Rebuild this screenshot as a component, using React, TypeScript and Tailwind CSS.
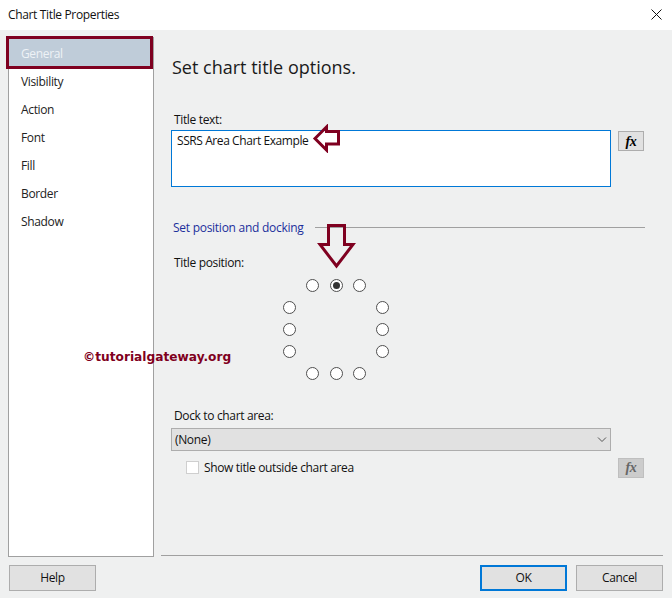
import React from 'react';

const navItems = ['General', 'Visibility', 'Action', 'Font', 'Fill', 'Border', 'Shadow'];

// 5 x 5 grid of anchor points, only the outer ring is used
const positions = [
  [0, 1, 1, 1, 0],
  [1, 0, 0, 0, 1],
  [1, 0, 0, 0, 1],
  [1, 0, 0, 0, 1],
  [0, 1, 1, 1, 0],
];

const Radio: React.FC<{ checked?: boolean }> = ({ checked }) => (
  <div className="w-[13px] h-[13px] rounded-full border border-[#4f4f4f] bg-white flex items-center justify-center">
    {checked && <div className="w-[7px] h-[7px] rounded-full bg-[#333333]" />}
  </div>
);

const FxButton: React.FC<{ disabled?: boolean; className?: string }> = ({ disabled, className }) => (
  <div
    className={`w-[26px] h-[20px] flex items-center justify-center border font-['Liberation_Serif',serif] italic font-bold text-[14px] ${
      disabled ? 'bg-[#cccccc] border-[#bfbfbf] text-[#666666]' : 'bg-[#e1e1e1] border-[#adadad] text-black'
    } ${className ?? ''}`}
  >
    fx
  </div>
);

const DialogButton: React.FC<{ label: string; primary?: boolean }> = ({ label, primary }) => (
  <div
    className={`w-[87px] h-[26px] flex items-center justify-center bg-[#e1e1e1] text-[#111111] ${
      primary ? 'border-2 border-[#0078d7]' : 'border border-[#adadad]'
    }`}
  >
    <span className="-mt-px">{label}</span>
  </div>
);

export default function App() {
  return (
    <div className="relative w-[672px] h-[598px] overflow-hidden bg-[#eff0f0] font-['Open_Sans',sans-serif] text-[12px] tracking-[-0.35px] text-[#111111]">
      {/* Title bar */}
      <div className="h-[30px] bg-white flex items-center justify-between pl-[8px] pr-[10px]">
        <span>Chart Title Properties</span>
        <svg width="11" height="11" viewBox="0 0 11 11" className="mb-[2px]">
          <path d="M0.5 0.5L10.5 10.5M10.5 0.5L0.5 10.5" stroke="#111" strokeWidth="1" fill="none" />
        </svg>
      </div>

      <div className="flex h-[526px] pl-[8px]">
        {/* Left nav */}
        <div className="w-[146px] h-[520px] mt-[7px] border border-[#a0a0a0] bg-white pt-[1px] pr-[1px]">
          {navItems.map((item, i) => (
            <div
              key={item}
              className={`flex items-center pl-[12px] ${
                i === 0 ? 'h-[29px] bg-[#bfccd9] text-[#eef2f6]' : 'h-[28px] text-[#222222]'
              }`}
            >
              {item}
            </div>
          ))}
        </div>

        {/* Main panel */}
        <div className="flex-1 ml-[18px] relative">
          <div className="text-[18px] leading-[24px] mt-[25px] tracking-normal text-[#1a1a1a]">Set chart title options.</div>

          <div className="ml-[2px] mt-[33px] leading-[16px]">Title text:</div>
          <div className="flex items-start -ml-px mt-[2px]">
            <div className="w-[440px] h-[57px] bg-white border border-[#0078d7] pl-[5px] pt-[1px] leading-[18px] tracking-[-0.42px]">
              SSRS Area Chart Example
            </div>
            <FxButton className="ml-[7px] mt-[1px]" />
          </div>

          <div className="flex items-center mt-[32px] h-[18px] w-[473px]">
            <span className="ml-px tracking-[-0.27px] text-[#1c2f9c]">Set position and docking</span>
            <div className="ml-[11px] h-px flex-1 bg-[#a0a0a0] -mt-[2px]" />
          </div>

          <div className="ml-[2px] mt-[18px] leading-[16px]">Title position:</div>

          <div className="ml-[106px] mt-[3px] grid grid-cols-[repeat(5,23.25px)] auto-rows-[22px] w-fit">
            {positions.flatMap((row, r) =>
              row.map((on, c) => (
                <div key={`${r}-${c}`} className="flex items-center justify-center">
                  {on === 1 && <Radio checked={r === 0 && c === 2} />}
                </div>
              ))
            )}
          </div>

          <div className="ml-[2px] mt-[24px] leading-[16px]">Dock to chart area:</div>
          <div className="-ml-px mt-[4px] w-[440px] h-[23px] bg-[#e1e1e1] border border-[#adadad] flex items-center justify-between pl-[3px] pr-[3px]">
            <span>(None)</span>
            <svg width="10" height="7" viewBox="0 0 10 7">
              <path d="M1 1.5L5 5.5L9 1.5" stroke="#555" strokeWidth="1" fill="none" />
            </svg>
          </div>
          <div className="flex items-center justify-between mt-[6px] h-[21px] w-[472px]">
            <div className="flex items-center ml-[14px]">
              <div className="w-[13px] h-[13px] bg-white border border-[#cfcfcf]" />
              <span className="ml-[5px]">Show title outside chart area</span>
            </div>
            <FxButton disabled />
          </div>
        </div>
      </div>

      {/* Footer */}
      <div className="flex">
        <div className="pl-[9px] pt-[9px]">
          <DialogButton label="Help" />
        </div>
        <div className="ml-[65px] w-[502px] border-t border-[#a0a0a0] -mt-px pt-[9px] flex justify-end gap-[9px]">
          <DialogButton label="OK" primary />
          <DialogButton label="Cancel" />
        </div>
      </div>

      {/* Annotations pasted on top of the screenshot */}
      <div className="absolute left-[6px] top-[36px] w-[147px] h-[33px] border-[3px] border-[#7f0020]" />
      <svg className="absolute left-[312px] top-[124px]" width="28" height="29" viewBox="0 0 28 29">
        <path d="M3 14.5L14.5 3V7.5H26.5V20H14.5V26Z" fill="none" stroke="#7f0020" strokeWidth="3" />
      </svg>
      <svg className="absolute left-[317px] top-[223px]" width="39" height="46" viewBox="0 0 39 46">
        <path d="M11.5 2.5H27.5V21.5H36L19.5 43L3 21.5H11.5Z" fill="none" stroke="#7f0020" strokeWidth="3" />
      </svg>
      <div className="absolute left-[83px] top-[349px] font-['DejaVu_Sans',sans-serif] font-bold text-[12.2px] tracking-normal leading-[17px] text-[#7f0020]">
        ©tutorialgateway.org
      </div>
    </div>
  );
}
